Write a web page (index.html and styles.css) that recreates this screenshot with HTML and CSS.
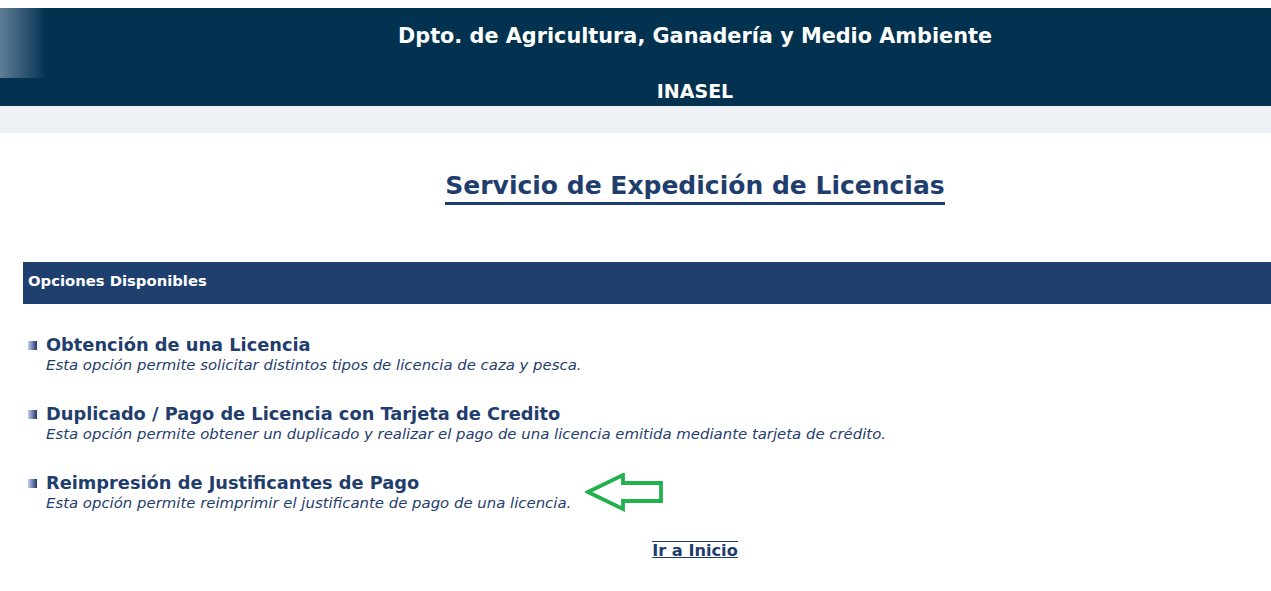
FILE: index.html
```html
<html>
  <head>
    <title>Servicio de Expedición de Licencias</title>
    <link rel="stylesheet" href="styles.css">
  </head>
  <body>

    <div class="cabecera">
      <div class="cab-titulo">Dpto. de Agricultura, Ganadería y Medio Ambiente</div>
      <div class="cab-sub">INASEL</div>
    </div>
    <div class="franja"></div>

    <div class="titulo-pagina">
      <span class="titulo">Servicio de Expedición de Licencias</span>
    </div>

    <div class="opciones">Opciones Disponibles</div>

    <ul class="lista">
      <li class="opcion">
        <span class="vineta"></span>
        <div class="texto">
          <a class="enlace" href="#">Obtención de una Licencia</a>
          <div class="desc">Esta opción permite solicitar distintos tipos de licencia de caza y pesca.</div>
        </div>
      </li>
      <li class="opcion">
        <span class="vineta"></span>
        <div class="texto">
          <a class="enlace" href="#">Duplicado / Pago de Licencia con Tarjeta de Credito</a>
          <div class="desc">Esta opción permite obtener un duplicado y realizar el pago de una licencia emitida mediante tarjeta de crédito.</div>
        </div>
      </li>
      <li class="opcion">
        <span class="vineta"></span>
        <div class="texto">
          <a class="enlace" href="#">Reimpresión de Justificantes de Pago</a>
          <div class="desc">Esta opción permite reimprimir el justificante de pago de una licencia.</div>
        </div>
        <svg class="flecha" width="80" height="40" viewBox="0 0 80 40">
          <path d="M3 19 L38 2 L38 10 L76 10 L76 28 L38 28 L38 36 Z" fill="none" stroke="#22b14c" stroke-width="3.8" stroke-linejoin="miter"/>
        </svg>
      </li>
    </ul>

    <div class="volver">
      <a class="inicio" href="#">Ir a Inicio</a>
    </div>

  </body>
</html>
```

FILE: styles.css
```css
body {
    margin: 0;
    padding-top: 8px;
    background: #ffffff;
    font-family: "DejaVu Sans", Verdana, sans-serif;
    color: #1f3d6d;
}

/* cabecera */
.cabecera {
    height: 98px;
    display: flex;
    flex-direction: column;
    align-items: center;
    padding-left: 119px;
    box-sizing: border-box;
    background: linear-gradient(to right, #5e7d95, #2a5170 60%, #02324f) 0 0 / 46px 70px no-repeat, #02324f;
    color: #ffffff;
    font-weight: bold;
}
.cab-titulo {
    font-size: 20.8px;
    line-height: 24px;
    margin-top: 16px;
}
.cab-sub {
    font-size: 19px;
    line-height: 22px;
    margin-top: 32px;
}

.franja {
    height: 27px;
    background: #edf0f5;
}

/* titulo */
.titulo-pagina {
    padding-left: 119px;
    text-align: center;
    margin-top: 38px;
    height: 91px;
}
.titulo {
    display: inline-block;
    font-weight: bold;
    font-size: 25px;
    color: #1f3d6d;
    border-bottom: 3px solid #1f3d6d;
    line-height: 30px;
    padding-bottom: 1px;
}

/* barra opciones */
.opciones {
    margin-left: 23px;
    height: 42px;
    line-height: 38px;
    padding-left: 5px;
    background: #1f3f6f;
    color: #ffffff;
    font-weight: bold;
    font-size: 14.8px;
}

.lista {
    list-style: none;
    margin: 0;
    padding: 30px 0 0 28px;
}
.opcion {
    display: flex;
    align-items: flex-start;
    height: 69px;
}
.vineta {
    width: 9px;
    height: 9px;
    margin-top: 7px;
    margin-right: 9px;
    background: linear-gradient(to right, #c9d1ea, #7f90c0 40%, #1f3466);
    flex: none;
}
.enlace {
    display: block;
    font-weight: bold;
    font-size: 17.8px;
    line-height: 22px;
    color: #1f3d6d;
    text-decoration: none;
}
.desc {
    font-style: italic;
    font-size: 14.9px;
    line-height: 18px;
    color: #1f3d6d;
}
.flecha {
    margin-left: 14px;
    margin-top: 1px;
}

.volver {
    padding-left: 119px;
    text-align: center;
    margin-top: 0;
}
.inicio {
    display: inline-block;
    font-weight: bold;
    font-size: 16.2px;
    color: #1f3d6d;
    text-decoration: underline;
    border-top: 1px solid #1f3d6d;
    line-height: 18px;
}
```
